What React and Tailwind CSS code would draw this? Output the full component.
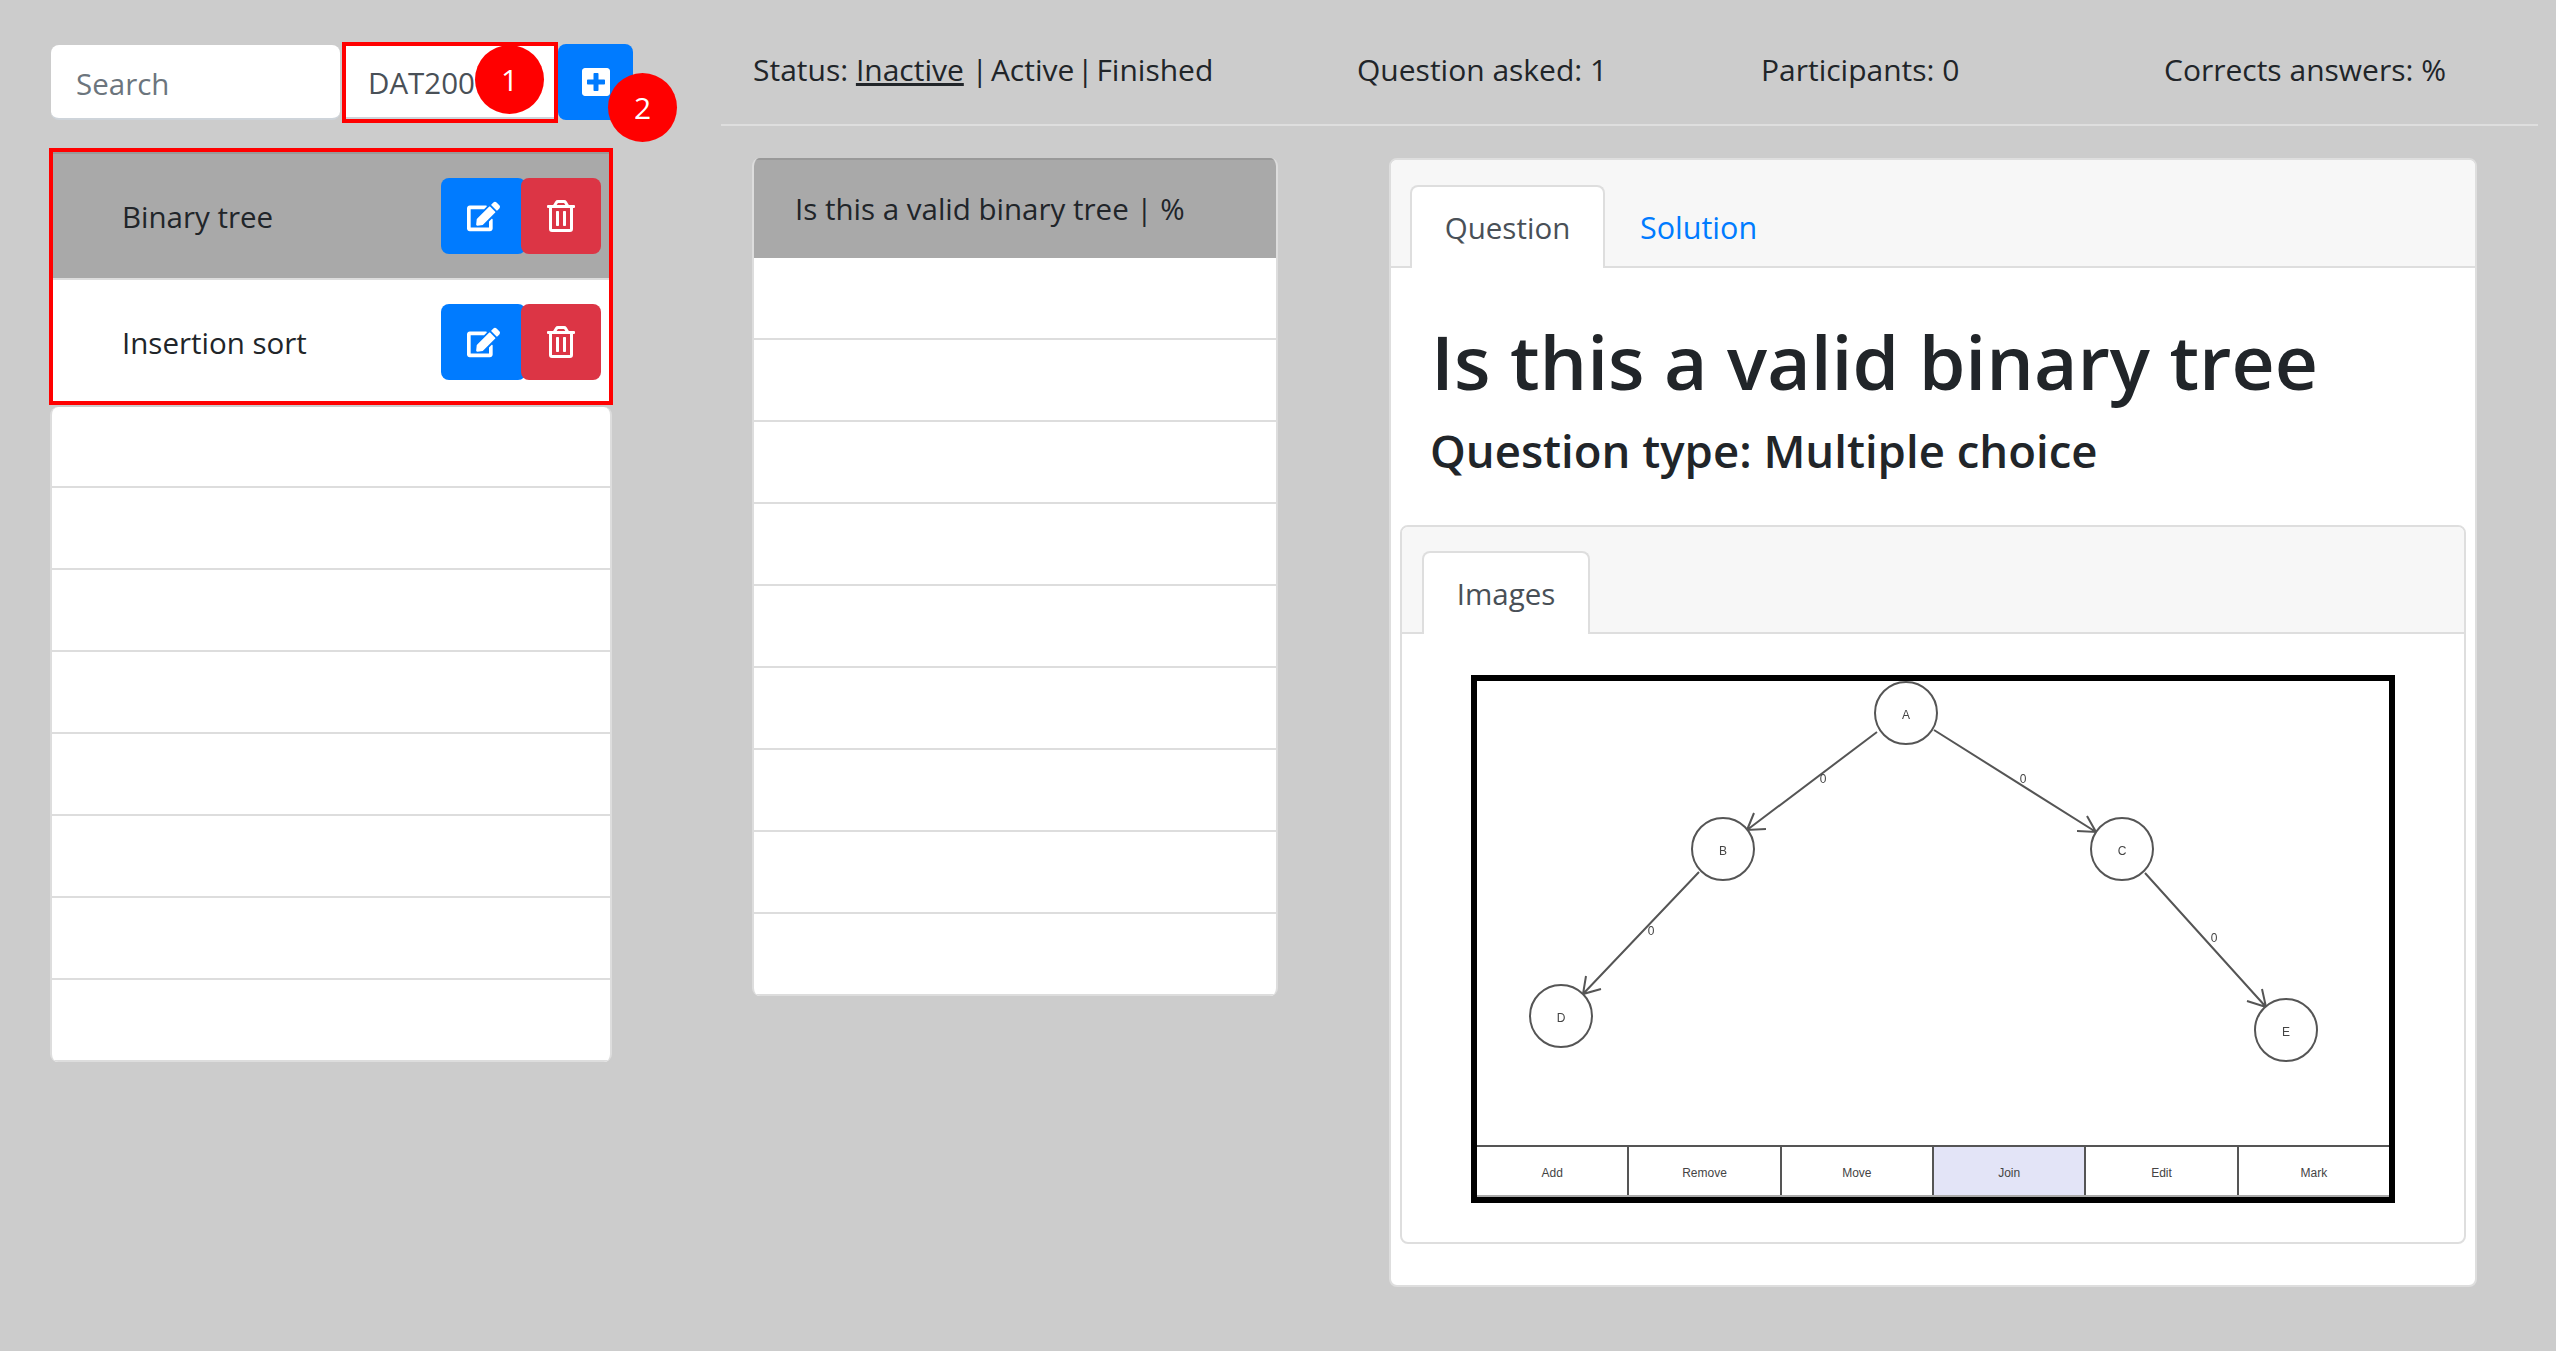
import { FaEdit, FaPlusSquare, FaRegTrashAlt } from 'react-icons/fa'

const font = { fontFamily: '"Open Sans", "Noto Sans", sans-serif' }

function Badge({ n, className }) {
  return (
    <span className={`absolute flex h-[69px] w-[69px] items-center justify-center rounded-full bg-[#ff0000] text-[30px] text-white ${className}`}>
      {n}
    </span>
  )
}

function TopicRow({ label, active }) {
  return (
    <div className={`flex items-center justify-between pl-[69px] pr-[8px] text-[29.5px] text-[#212529] ${active ? 'h-[128px] border-y-2 border-t-[#999999] border-b-[#dddddd] bg-[#a9a9a9]' : 'h-[121px] bg-white pt-[3px]'}`}>
      <span className="pt-[3px]">{label}</span>
      <div className="flex">
        <button className="flex h-[76px] w-[85px] items-center justify-center rounded-lg bg-[#007bff] text-white">
          <FaEdit size={33} />
        </button>
        <button className="relative -ml-[5px] flex h-[76px] w-[80px] items-center justify-center rounded-lg bg-[#dc3545] text-white">
          <FaRegTrashAlt size={32} />
        </button>
      </div>
    </div>
  )
}

function TreeDiagram() {
  const nodes = [
    ['A', 429, 32],
    ['B', 246, 168],
    ['C', 645, 168],
    ['D', 84, 335],
    ['E', 809, 349],
  ]
  const edges = [
    'M400 51L270 149M277 132L270 149L289 148',
    'M457 49L619 151M610 135L619 151L600 150',
    'M222 191L106 313M109 295L106 313L124 308',
    'M668 192L789 326M785 308L789 326L770 320',
  ]
  const weights = [
    [346, 102],
    [546, 102],
    [174, 254],
    [737, 261],
  ]
  return (
    <svg viewBox="0 0 912 464" className="block h-[464px] w-[912px] blur-[0.4px]">
      {edges.map((d) => (
        <path key={d} d={d} fill="none" stroke="#555555" strokeWidth="2" />
      ))}
      {nodes.map(([name, x, y]) => (
        <g key={name}>
          <circle cx={x} cy={y} r="31" fill="white" stroke="#555555" strokeWidth="2" />
          <text x={x} y={y + 6} textAnchor="middle" fontSize="12" fill="#444444" fontFamily="Liberation Sans">{name}</text>
        </g>
      ))}
      {weights.map(([x, y]) => (
        <text key={x} x={x} y={y} textAnchor="middle" fontSize="12" fill="#444444" fontFamily="Liberation Sans">0</text>
      ))}
    </svg>
  )
}

function App() {
  const tools = ['Add', 'Remove', 'Move', 'Join', 'Edit', 'Mark']

  return (
    <div className="flex h-[1351px] w-full overflow-hidden bg-[#cccccc]" style={font}>
      {/* topics column */}
      <div className="ml-[49px] w-[564px] shrink-0 pt-[42px]">
        <div className="relative flex h-[81px] w-[590px]">
          <div className="ml-[2px] mt-[3px] flex h-[75px] w-[289px] items-center rounded-lg border-b-2 border-[#ced4da] bg-white pl-[25px] pt-[5px] text-[29.5px] text-[#6c757d]">
            Search
          </div>
          <div className="ml-[2px] h-[81px] w-[216px] border-4 border-[#ff0000] bg-white">
            <div className="flex h-[73px] items-center border-b-2 border-[#ced4da] pl-[22px] pt-[4px] text-[29.5px] text-[#495057]">DAT200</div>
          </div>
          <button className="mt-[2px] flex h-[76px] w-[75px] items-center justify-center rounded-lg bg-[#007bff] text-white">
            <FaPlusSquare size={32} />
          </button>
          <Badge n="1" className="left-[426px] top-[3px]" />
          <Badge n="2" className="left-[559px] top-[31px]" />
        </div>

        <div className="mt-[25px] w-[564px] border-4 border-[#ff0000] bg-white">
          <TopicRow label="Binary tree" active />
          <TopicRow label="Insertion sort" />
        </div>

        <div className="ml-[1px] mt-[2px] w-[562px] overflow-hidden rounded-lg border-x-2 border-[#dddddd] bg-white">
          <div className="h-[81px] border-b-2 border-[#dddddd]" />
          {[0, 1, 2, 3, 4, 5, 6].map((i) => (
            <div key={i} className="h-[82px] border-b-2 border-[#dddddd]" />
          ))}
        </div>
      </div>

      {/* session area */}
      <div className="ml-[108px] w-[1817px] shrink-0">
        <div className="flex h-[124px] items-center pl-[32px] pt-[14px] text-[30px] text-[#212529]">
          <div className="w-[604px]">
            Status: <span className="underline">Inactive</span> <span className="[word-spacing:-5px]">| Active | Finished</span>
          </div>
          <div className="w-[404px]">Question asked: 1</div>
          <div className="w-[403px]">Participants: 0</div>
          <div>Corrects answers: %</div>
        </div>
        <div className="h-[2px] bg-[#dedede]" />

        <div className="ml-[31px] mt-[32px] flex items-start">
          <div className="w-[526px] shrink-0 overflow-hidden rounded-lg border-x-2 border-[#dddddd] bg-white">
            <div className="-mx-[2px] flex h-[100px] items-center border-x-2 border-t-2 border-[#999999] bg-[#a9a9a9] pl-[41px] text-[29.5px] text-[#212529]">
              Is this a valid binary tree | %
            </div>
            {[0, 1, 2, 3, 4, 5, 6, 7, 8].map((i) => (
              <div key={i} className="h-[82px] border-b-2 border-[#dddddd]" />
            ))}
          </div>

          <div className="ml-[111px] h-[1129px] w-[1088px] shrink-0 overflow-hidden rounded-lg border-2 border-[#dedede] bg-white">
            <div className="flex h-[108px] items-end border-b-2 border-[#dedede] bg-[#f7f7f7] pl-[19px]">
              <div className="-mb-[2px] flex h-[83px] w-[195px] items-center justify-center rounded-t-lg border-x-2 border-t-2 border-[#dedede] bg-white pt-[2px] text-[29.5px] text-[#495057]">
                Question
              </div>
              <div className="ml-[35px] flex h-[83px] items-center pt-[6px] text-[30.5px] text-[#007bff]">Solution</div>
            </div>

            <h1 className="ml-[40px] mt-[45px] text-[75px] font-semibold leading-[96px] text-[#212529]">Is this a valid binary tree</h1>
            <h4 className="ml-[39px] mt-[12px] text-[45.5px] font-semibold leading-[59px] text-[#212529]">Question type: Multiple choice</h4>

            <div className="ml-[9px] mt-[45px] h-[719px] w-[1066px] overflow-hidden rounded-lg border-2 border-[#dedede]">
              <div className="flex h-[107px] items-end border-b-2 border-[#dedede] bg-[#f7f7f7] pl-[20px]">
                <div className="-mb-[2px] flex h-[83px] w-[168px] items-center justify-center rounded-t-lg border-x-2 border-t-2 border-[#dedede] bg-white pt-[2px] text-[29.5px] text-[#495057]">
                  Images
                </div>
              </div>
              <div className="ml-[69px] mt-[41px] flex h-[528px] w-[924px] flex-col border-[6px] border-black bg-white">
                <TreeDiagram />
                <div className="flex h-[52px] border-y-2 border-t-[#555555] border-b-[#aaaaaa]" style={{ fontFamily: '"Liberation Sans", sans-serif' }}>
                  {tools.map((tool) => (
                    <div
                      key={tool}
                      className={`flex flex-1 items-center justify-center border-r-2 border-[#555555] pt-[3px] text-[12px] text-[#444444] last:border-r-0 ${tool === 'Join' ? 'bg-[#e3e4f7]' : 'bg-white'}`}
                    >
                      {tool}
                    </div>
                  ))}
                </div>
              </div>
            </div>
          </div>
        </div>
      </div>
    </div>
  )
}

export default App
